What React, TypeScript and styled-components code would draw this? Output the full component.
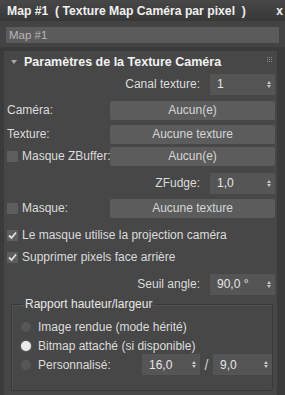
import React from "react";
import styled, { createGlobalStyle } from "styled-components";

const GlobalStyle = createGlobalStyle`
  html, body {
    margin: 0;
    padding: 0;
    background: #3b3b3b;
  }
  body {
    font-family: "Liberation Sans", Arial, sans-serif;
    font-size: 12px;
    color: #dcdcdc;
  }
  * {
    box-sizing: border-box;
  }
`;

const Window = styled.div`
  width: 285px;
  height: 395px;
  overflow: hidden;
  display: flex;
  flex-direction: column;
  background: #3b3b3b;
`;

const TitleBar = styled.div`
  height: 21px;
  display: flex;
  align-items: center;
  justify-content: space-between;
  padding: 0 2px 0 7px;
  background: linear-gradient(#474747, #383838);
  color: #f0f0f0;
  font-weight: bold;
  font-size: 12.2px;
  white-space: pre;
`;

const CloseMark = styled.span`
  font-size: 12px;
`;

const NameArea = styled.div`
  padding: 6px 6px 4px 6px;
  background: #434343;
`;

const NameField = styled.div`
  height: 16px;
  line-height: 16px;
  padding-left: 3px;
  background: #5b5b5b;
  color: #b8b8b8;
  font-size: 11.5px;
`;

const Rollout = styled.div`
  margin: 3px 7px 0 3px;
  flex: 1;
  background: #474747;
  border: 1px solid #3a3a3a;
  border-bottom: none;
  display: flex;
  flex-direction: column;
`;

const RolloutHeader = styled.div`
  height: 21px;
  display: flex;
  align-items: center;
  padding: 0 4px 0 7px;
  font-weight: bold;
  color: #f2f2f2;
  font-size: 12.5px;
  gap: 7px;
`;

const Caret = styled.span`
  width: 0;
  height: 0;
  border-left: 3.5px solid transparent;
  border-right: 3.5px solid transparent;
  border-top: 4px solid #a8a8a8;
`;

const Grip = styled.svg`
  margin-left: auto;
  margin-top: -4px;
`;

const Body = styled.div`
  display: flex;
  flex-direction: column;
  padding: 0 2px 0 3px;
`;

const Row = styled.div<{ $h?: number; $mt?: number; $right?: boolean }>`
  height: ${({ $h }) => $h ?? 22}px;
  margin-top: ${({ $mt }) => $mt ?? 0}px;
  display: flex;
  align-items: center;
  justify-content: ${({ $right }) => ($right ? "flex-end" : "flex-start")};
`;

const Label = styled.span<{ $w?: number }>`
  width: ${({ $w }) => ($w ? `${$w}px` : "auto")};
  display: flex;
  align-items: center;
  gap: 4px;
  white-space: nowrap;
  flex-shrink: 0;
`;

const RightLabel = styled.span`
  margin-right: 10px;
`;

const Button = styled.div`
  flex: 1;
  height: 19px;
  line-height: 19px;
  text-align: center;
  background: #5c5c5c;
  border-radius: 2px;
  color: #d6d6d6;
`;

const Spinner = styled.div<{ $w: number }>`
  width: ${({ $w }) => $w}px;
  height: 21px;
  display: flex;
  align-items: center;
  justify-content: space-between;
  padding: 0 4px 0 7px;
  background: #555555;
  color: #e6e6e6;
  flex-shrink: 0;
`;

const Arrows = styled.span`
  display: flex;
  flex-direction: column;
  gap: 1px;
  &::before,
  &::after {
    content: "";
    width: 0;
    height: 0;
    border-left: 2.5px solid transparent;
    border-right: 2.5px solid transparent;
  }
  &::before {
    border-bottom: 3px solid #c8c8c8;
  }
  &::after {
    border-top: 3px solid #c8c8c8;
  }
`;

const Box = styled.span`
  width: 11px;
  height: 11px;
  background: #5d5d5d;
  display: inline-flex;
  align-items: center;
  justify-content: center;
  flex-shrink: 0;
`;

const Group = styled.fieldset`
  margin: 2px 2px 0 4px;
  padding: 1px 0 16px 9px;
  min-width: 0;
  border: 1px solid #383838;
  border-radius: 2px;
  box-shadow: inset 1px 1px 0 #525252;
  display: flex;
  flex-direction: column;
`;

const Legend = styled.legend`
  padding: 0 3px;
  margin-left: 1px;
  color: #e6e6e6;
`;

const Radio = styled.span<{ $on?: boolean }>`
  width: 10px;
  height: 10px;
  border-radius: 50%;
  background: ${({ $on }) => ($on ? "#ececec" : "#575757")};
  box-shadow: ${({ $on }) => ($on ? "0 0 2px #9a9a9a" : "none")};
  margin-right: 7px;
  flex-shrink: 0;
`;

const Slash = styled.span`
  width: 13px;
  text-align: center;
  font-size: 14px;
  color: #d0d0d0;
`;

const Check = () => (
  <svg width="9" height="9" viewBox="0 0 9 9">
    <path d="M1 4.5 L3.5 7 L8 1.5" stroke="#e0e0e0" strokeWidth="1.8" fill="none" />
  </svg>
);

const SpinnerBox = ({ value, w }: { value: string; w: number }) => (
  <Spinner $w={w}>
    <span>{value}</span>
    <Arrows />
  </Spinner>
);

export default function App() {
  return (
    <>
      <GlobalStyle />
      <Window>
        <TitleBar>
          <span>Map #1  ( Texture Map Caméra par pixel  )</span>
          <CloseMark>x</CloseMark>
        </TitleBar>
        <NameArea>
          <NameField>Map #1</NameField>
        </NameArea>
        <Rollout>
          <RolloutHeader>
            <Caret />
            <span>Paramètres de la Texture Caméra</span>
            <Grip width="6" height="6" viewBox="0 0 6 6">
              {[0, 2, 4].map((x) =>
                [0, 2, 4].map((y) => (
                  <rect key={`${x}-${y}`} x={x} y={y} width="1" height="1" fill="#8a8a8a" />
                ))
              )}
            </Grip>
          </RolloutHeader>
          <Body>
            <Row $mt={1} $right>
              <RightLabel>Canal texture:</RightLabel>
              <SpinnerBox value="1" w={65} />
            </Row>
            <Row $mt={4}>
              <Label $w={103}>Caméra:</Label>
              <Button>Aucun(e)</Button>
            </Row>
            <Row $mt={2}>
              <Label $w={103}>Texture:</Label>
              <Button>Aucune texture</Button>
            </Row>
            <Row $mt={0}>
              <Label $w={103}>
                <Box />
                Masque ZBuffer:
              </Label>
              <Button>Aucun(e)</Button>
            </Row>
            <Row $mt={5} $right>
              <RightLabel>ZFudge:</RightLabel>
              <SpinnerBox value="1,0" w={65} />
            </Row>
            <Row $mt={3}>
              <Label $w={103}>
                <Box />
                Masque:
              </Label>
              <Button>Aucune texture</Button>
            </Row>
            <Row $mt={5}>
              <Label>
                <Box>
                  <Check />
                </Box>
                Le masque utilise la projection caméra
              </Label>
            </Row>
            <Row $mt={0}>
              <Label>
                <Box>
                  <Check />
                </Box>
                Supprimer pixels face arrière
              </Label>
            </Row>
            <Row $mt={5} $right>
              <RightLabel>Seuil angle:</RightLabel>
              <SpinnerBox value="90,0 °" w={65} />
            </Row>
            <Group>
              <Legend>Rapport hauteur/largeur</Legend>
              <Row $h={19} $mt={5}>
                <Radio />
                Image rendue (mode hérité)
              </Row>
              <Row $h={19}>
                <Radio $on />
                Bitmap attaché (si disponible)
              </Row>
              <Row $h={19}>
                <Radio />
                <Label $w={104}>Personnalisé:</Label>
                <SpinnerBox value="16,0" w={58} />
                <Slash>/</Slash>
                <SpinnerBox value="9,0" w={59} />
              </Row>
            </Group>
          </Body>
        </Rollout>
      </Window>
    </>
  );
}
